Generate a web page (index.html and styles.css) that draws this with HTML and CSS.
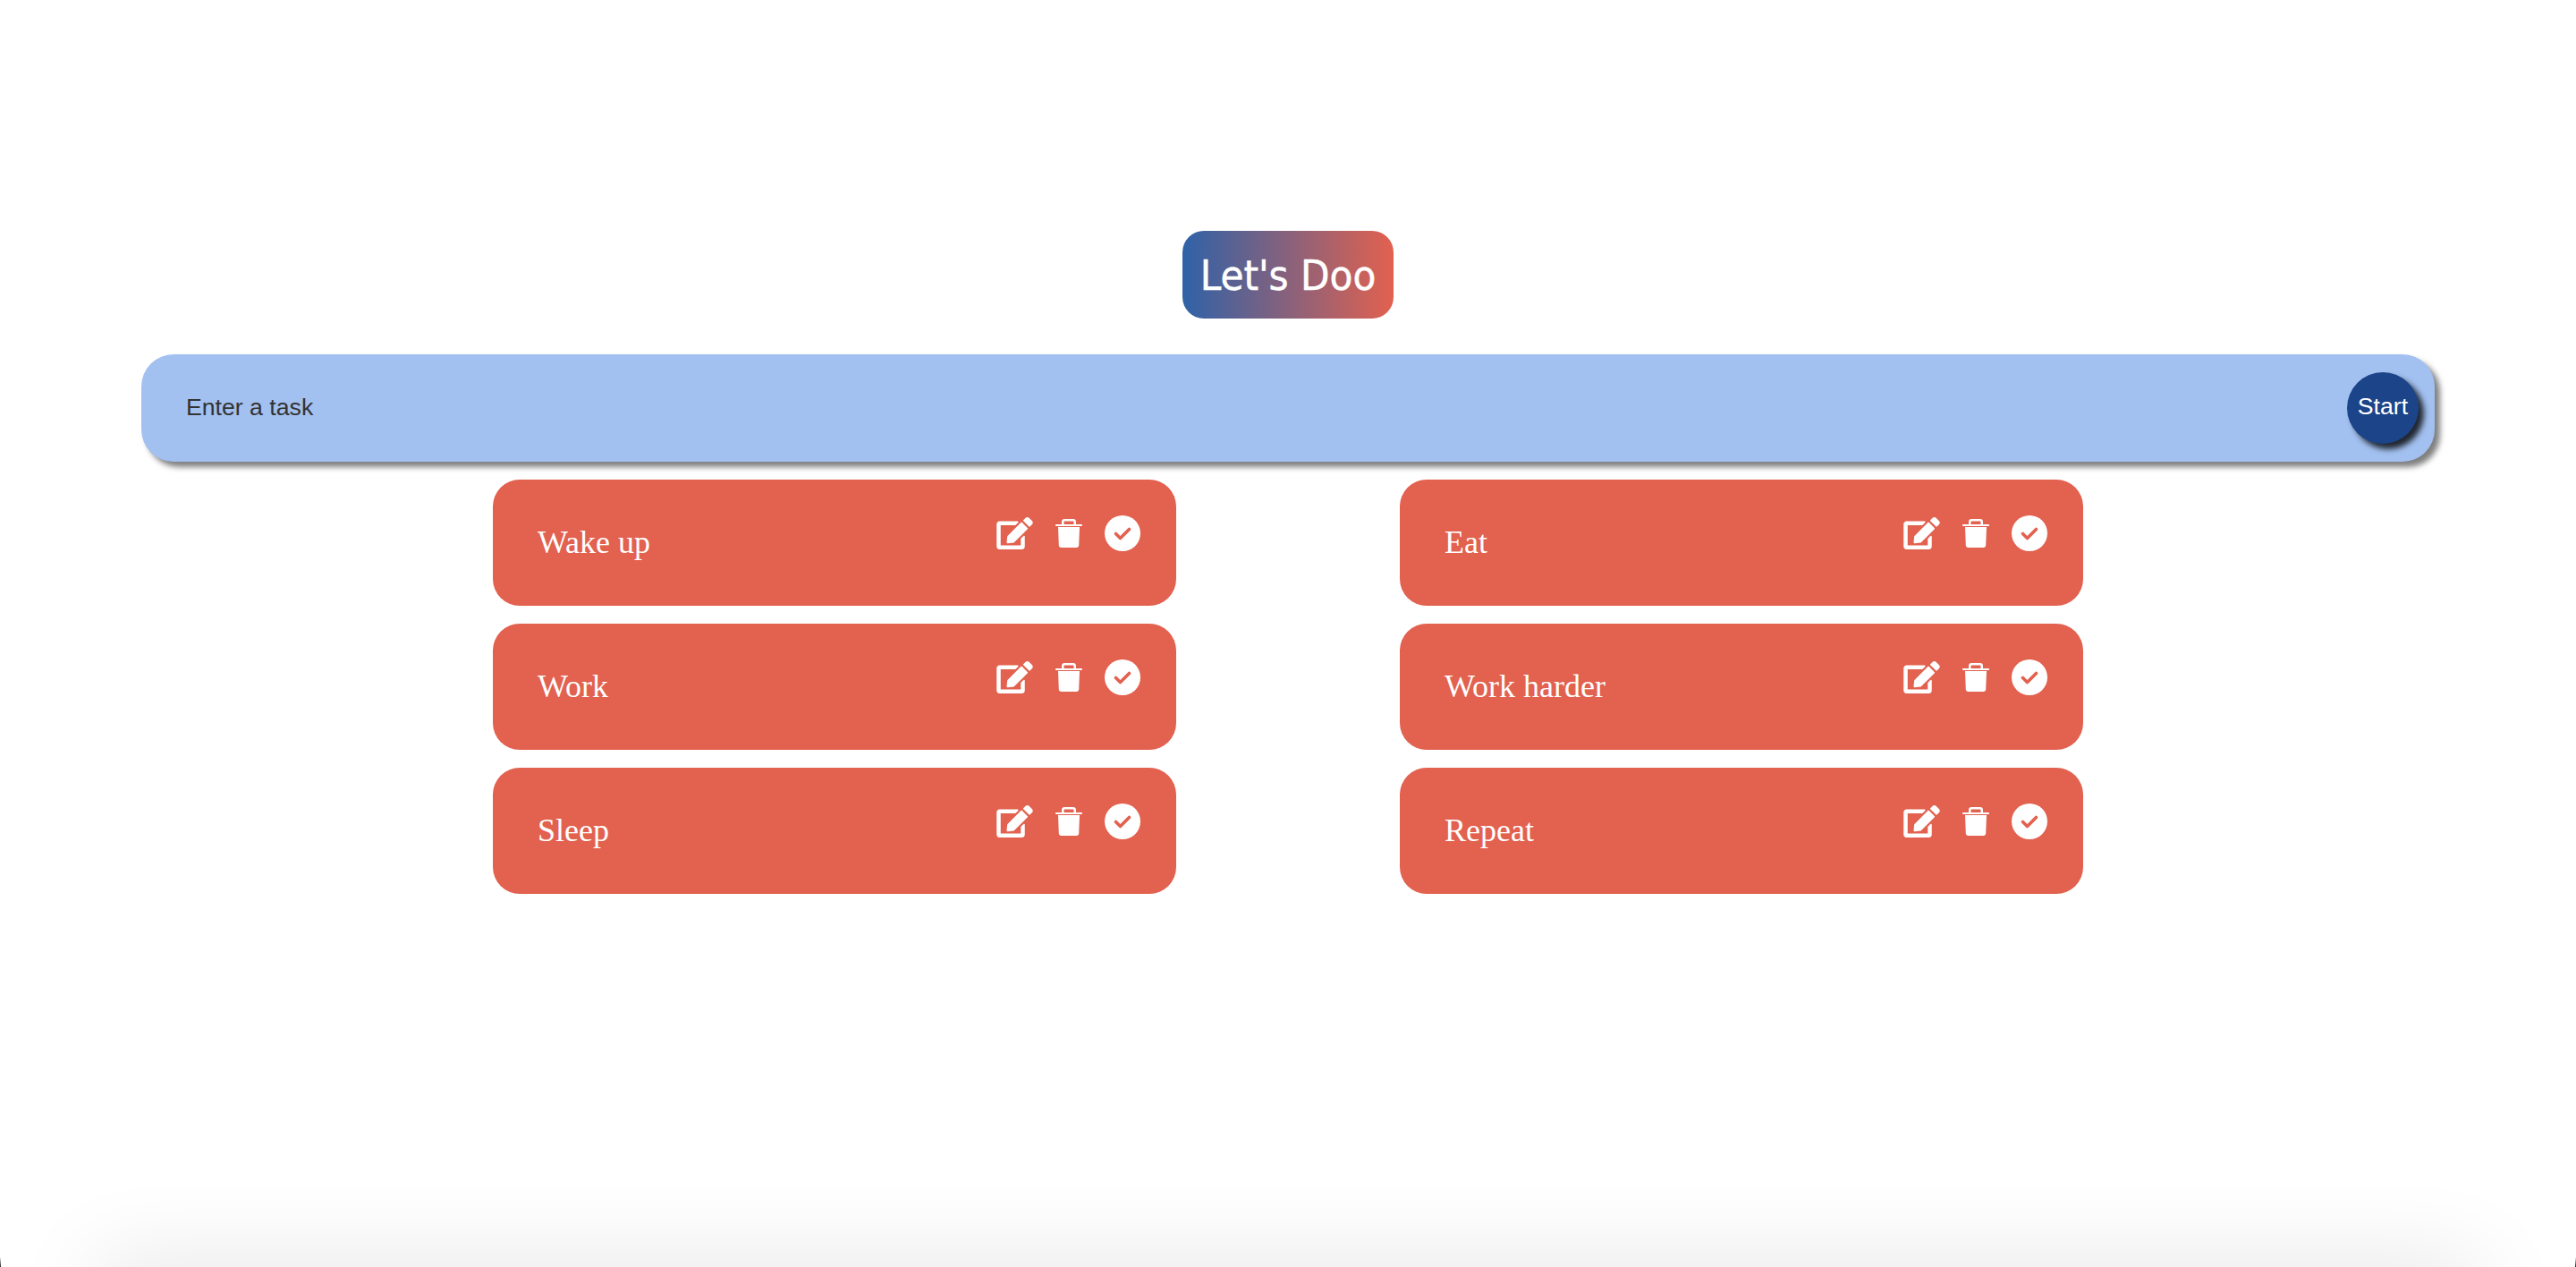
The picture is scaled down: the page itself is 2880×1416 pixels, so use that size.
FILE: index.html
```html
<!DOCTYPE html>
<html lang="en">
<head>
    <meta charset="UTF-8">
    <meta name="viewport" content="width=device-width, initial-scale=1.0">
    <title>Let's Doo</title>
    <link rel="stylesheet" href="styles.css">
</head>
<body>
<svg class="icon-defs" width="0" height="0">
    <symbol id="iconEdit" viewBox="0 0 576 512">
        <path d="M402.6 83.2l90.2 90.2c3.8 3.8 3.8 10 0 13.8L274.4 405.6l-92.8 10.3c-12.4 1.4-22.9-9.1-21.5-21.5l10.3-92.8L388.8 83.2c3.8-3.8 10-3.8 13.8 0zm162-22.9l-48.8-48.8c-15.2-15.2-39.9-15.2-55.2 0l-35.4 35.4c-3.8 3.8-3.8 10 0 13.8l90.2 90.2c3.8 3.8 10 3.8 13.8 0l35.4-35.4c15.2-15.3 15.2-40 0-55.2zM384 346.2V448H64V128h229.8c3.2 0 6.2-1.3 8.5-3.5l40-40c7.6-7.6 2.2-20.5-8.5-20.5H48C21.5 64 0 85.5 0 112v352c0 26.5 21.5 48 48 48h352c26.5 0 48-21.5 48-48V306.2c0-10.7-12.9-16-20.5-8.5l-40 40c-2.2 2.3-3.5 5.300-3.500 8.500z"/>
    </symbol>
    <symbol id="iconTrash" viewBox="0 0 30 32">
        <path d="M7 6V3c0-1.700 1.300-3 3-3h10c1.700 0 3 1.300 3 3v3h6c.6 0 1 .4 1 1s-.4 1-1 1H1C.4 8 0 7.600 0 7s.4-1 1-1zm2.500 0h11V3.500c0-.6-.4-1-1-1h-9c-.6 0-1 .4-1 1zM3 9h24l-.8 20.500c-.1 1.400-1.200 2.500-2.700 2.500h-17c-1.500 0-2.600-1.100-2.700-2.500z" fill-rule="evenodd"/>
    </symbol>
    <symbol id="iconCheck" viewBox="0 0 40 40">
        <circle cx="20" cy="20" r="20"/>
        <polyline points="12.500,20.500 17.500,25.500 27.500,15.500" fill="none" stroke="#e2614f" stroke-width="3.600" stroke-linecap="round" stroke-linejoin="round"/>
    </symbol>
</svg>

<main class="app">
    <h1 class="app-title">Let's Doo</h1>

    <form class="task-form">
        <input class="task-input" type="text" placeholder="Enter a task">
        <button class="start-btn" type="button">Start</button>
    </form>

    <div class="task-grid">
        <div class="task-card">
            <span class="task-name">Wake up</span>
            <div class="task-icons">
                <svg class="icon icon-edit"><use href="#iconEdit"/></svg>
                <svg class="icon icon-trash"><use href="#iconTrash"/></svg>
                <svg class="icon icon-check"><use href="#iconCheck"/></svg>
            </div>
        </div>
        <div class="task-card">
            <span class="task-name">Eat</span>
            <div class="task-icons">
                <svg class="icon icon-edit"><use href="#iconEdit"/></svg>
                <svg class="icon icon-trash"><use href="#iconTrash"/></svg>
                <svg class="icon icon-check"><use href="#iconCheck"/></svg>
            </div>
        </div>
        <div class="task-card">
            <span class="task-name">Work</span>
            <div class="task-icons">
                <svg class="icon icon-edit"><use href="#iconEdit"/></svg>
                <svg class="icon icon-trash"><use href="#iconTrash"/></svg>
                <svg class="icon icon-check"><use href="#iconCheck"/></svg>
            </div>
        </div>
        <div class="task-card">
            <span class="task-name">Work harder</span>
            <div class="task-icons">
                <svg class="icon icon-edit"><use href="#iconEdit"/></svg>
                <svg class="icon icon-trash"><use href="#iconTrash"/></svg>
                <svg class="icon icon-check"><use href="#iconCheck"/></svg>
            </div>
        </div>
        <div class="task-card">
            <span class="task-name">Sleep</span>
            <div class="task-icons">
                <svg class="icon icon-edit"><use href="#iconEdit"/></svg>
                <svg class="icon icon-trash"><use href="#iconTrash"/></svg>
                <svg class="icon icon-check"><use href="#iconCheck"/></svg>
            </div>
        </div>
        <div class="task-card">
            <span class="task-name">Repeat</span>
            <div class="task-icons">
                <svg class="icon icon-edit"><use href="#iconEdit"/></svg>
                <svg class="icon icon-trash"><use href="#iconTrash"/></svg>
                <svg class="icon icon-check"><use href="#iconCheck"/></svg>
            </div>
        </div>
    </div>
</main>
<div class="window-shadow"></div>
</body>
</html>
```

FILE: styles.css
```css
html, body {
    height: 100%;
}
body {
    margin: 0;
    background-color: #fff;
    overflow: hidden;
}
/* dark slivers at the bottom corners of the window */
body::before, body::after {
    content: "";
    position: fixed;
    bottom: 0;
    width: 1px;
    height: 11px;
    background: linear-gradient(to bottom, transparent, #222);
}
body::before {
    left: 0;
}
body::after {
    right: 0;
}
.icon-defs {
    position: absolute;
}
.app {
    display: flex;
    flex-direction: column;
    align-items: center;
    padding: 258px 158px 0 158px;
}
.app-title {
    width: 236px;
    height: 98px;
    margin: 0 0 40px 0;
    display: flex;
    align-items: center;
    justify-content: center;
    border-radius: 24px;
    background: linear-gradient(to right, #2f62a8, #e2614f);
    color: white;
    font-family: 'DejaVu Sans Condensed', 'DejaVu Sans', sans-serif;
    font-size: 47px;
    font-weight: normal;
    -webkit-text-stroke: 0.5px white;
}
.task-form {
    width: 100%;
    height: 120px;
    box-sizing: border-box;
    display: flex;
    align-items: center;
    justify-content: space-between;
    padding: 0 18px 0 50px;
    border-radius: 36px;
    background-color: #a2c0f0;
    box-shadow: 6px 6px 6px rgba(0, 0, 0, 0.5);
    margin-bottom: 20px;
}
.task-input {
    flex: 1;
    border: none;
    outline: none;
    padding: 0;
    margin-bottom: 2px;
    background: transparent;
    font-family: 'Liberation Sans', sans-serif;
    font-size: 26.67px;
    color: #333;
}
.task-input::placeholder {
    color: #333;
    opacity: 1;
}
.start-btn {
    width: 80px;
    height: 80px;
    padding: 0 0 4px 0;
    border: none;
    border-radius: 50%;
    background-color: #1c4489;
    color: white;
    font-family: 'Liberation Sans', sans-serif;
    font-size: 26.67px;
    box-shadow: 6px 6px 6px rgba(0, 0, 0, 0.8);
}
.task-grid {
    display: grid;
    grid-template-columns: 764px 764px;
    column-gap: 250px;
    row-gap: 20px;
}
.task-card {
    height: 141px;
    box-sizing: border-box;
    display: flex;
    align-items: center;
    justify-content: space-between;
    padding: 0 40px 0 50px;
    border-radius: 30px;
    background-color: #e2614f;
    color: white;
}
.task-name {
    margin-bottom: 2px;
    font-family: 'Liberation Serif', serif;
    font-size: 36px;
}
.task-icons {
    display: flex;
    align-items: center;
    gap: 25px;
    margin-bottom: 21px;
    fill: white;
}
.icon {
    display: block;
}
.icon-edit {
    width: 41px;
    height: 36px;
}
.icon-trash {
    width: 30px;
    height: 32px;
}
.icon-check {
    width: 40px;
    height: 40px;
}
.window-shadow {
    position: fixed;
    left: 110px;
    right: 110px;
    bottom: -60px;
    height: 60px;
    box-shadow: 0 0 100px rgba(0, 0, 0, 0.13);
}
```
